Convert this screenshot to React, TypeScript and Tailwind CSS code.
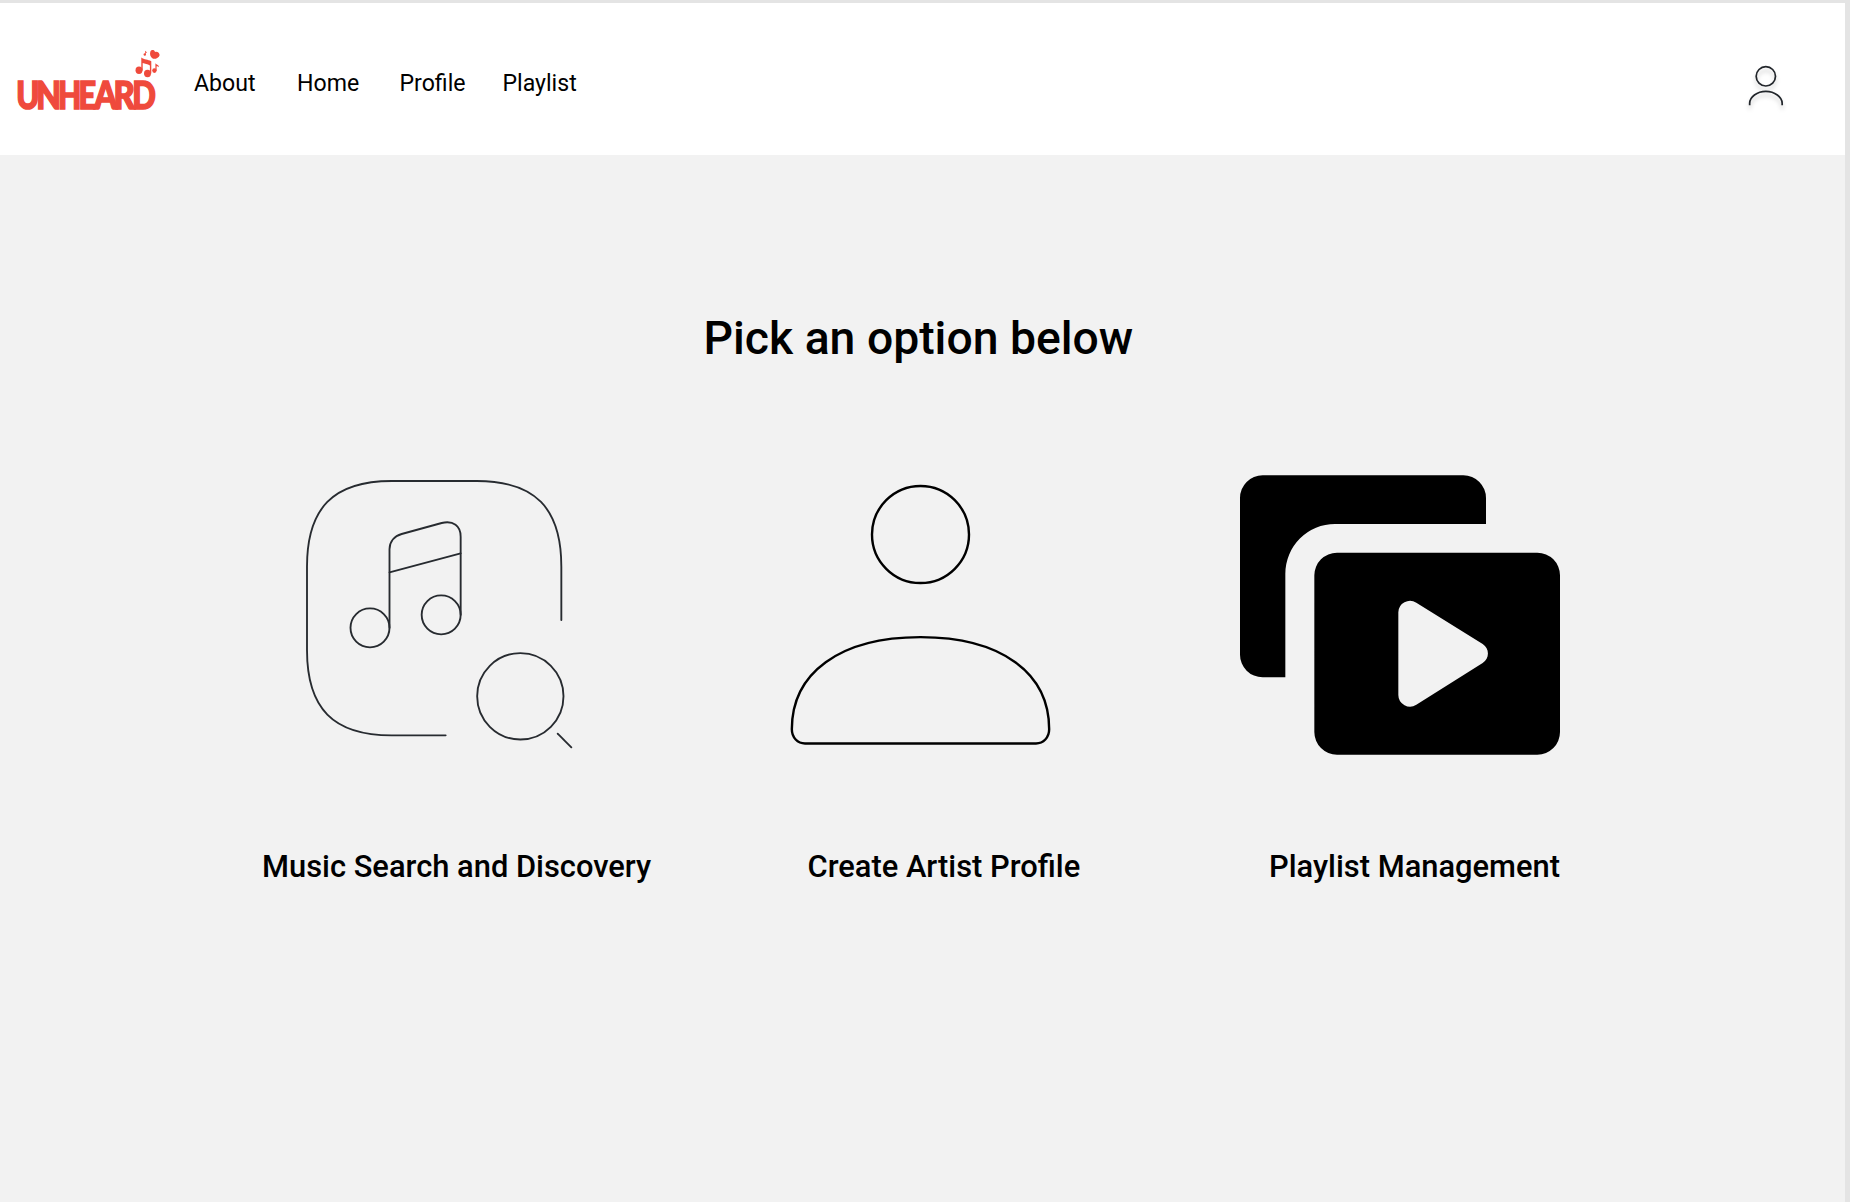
const letters = [
  { c: "U", x: 16.3, w: 23.2 },
  { c: "N", x: 36.3, w: 24.7 },
  { c: "H", x: 58, w: 23.3 },
  { c: "E", x: 78.6, w: 17.6 },
  { c: "A", x: 94.2, w: 23 },
  { c: "R", x: 113.6, w: 21.4 },
  { c: "D", x: 132.2, w: 23.6 },
];

function Logo() {
  return (
    <svg className="h-[80px] w-[170px] shrink-0" viewBox="0 40 170 80" fill="#ef4a3c" role="img" aria-label="Unheard">
      {letters.map((l) => (
        <text
          key={l.c}
          x={l.x}
          y="109"
          textLength={l.w}
          lengthAdjust="spacingAndGlyphs"
          fontFamily="Lato, sans-serif"
          fontWeight="900"
          fontSize="38.3"
          stroke="#ef4a3c"
          strokeWidth="1.6"
        >
          {l.c}
        </text>
      ))}
      <ellipse cx="139" cy="70.3" rx="3.5" ry="3.7" />
      <ellipse cx="147.5" cy="73.5" rx="3.5" ry="3.7" />
      <path d="M141.3 57.6C144 60 148 59.5 151.3 61.3V73.5H149.9V65.5C147.5 63.8 145 63.8 142.7 62.9V70.5H141.3Z" />
      <ellipse cx="154.4" cy="70.6" rx="2.2" ry="2.4" />
      <path d="M155.4 63.2C156.5 64.6 159 64.8 159 67.3C158.2 66.2 157.4 66 156.6 66.2V70.8H155.4Z" />
      <ellipse cx="144.8" cy="54.5" rx="1.2" ry="1.3" />
      <path d="M145.1 50.8C145.7 51.5 147 51.7 147.1 53L145.8 52.6V54.6H145.1Z" />
      <path d="M153 58.8C150.2 57.2 149.5 53.8 150.4 51.5C151.6 49.4 154.4 49.7 155 51.9C157.2 51 159.8 52.8 159.6 55.2C159 57.5 156.2 59.2 153 58.8Z" />
    </svg>
  );
}

function AccountIcon() {
  return (
    <svg
      className="h-[50px] w-[50px] drop-shadow-[0_4px_2px_rgba(0,0,0,0.2)]"
      viewBox="60 30 150 150"
      fill="none"
      stroke="#22262b"
      strokeWidth="5.2"
    >
      <circle cx="137.5" cy="79" r="29" />
      <path d="M89 166V160C89 141 111 124 137.5 124C164 124 186.5 141 186.5 160V166" />
    </svg>
  );
}

function MusicSearchIcon() {
  return (
    <svg className="h-[300px] w-[300px]" viewBox="0 0 900 900" fill="none" stroke="#272b30" strokeWidth="5.6" strokeLinecap="round">
      <path d="M814 480V320C814 145 736 63 560 63H305C129 63 51 145 51 320V570C51 745 129 826 305 826H467" />
      <circle cx="240" cy="503.5" r="58.5" />
      <circle cx="453.5" cy="464.5" r="58.5" />
      <path d="M298.5 503V268C298.5 245 313 228 335 222L455 189C490 181 512 197 512 230V464" />
      <path d="M298.5 337L512 280" />
      <circle cx="691" cy="709" r="129.5" />
      <path d="M803 821L844 862" />
    </svg>
  );
}

function ArtistIcon() {
  return (
    <svg className="h-[300px] w-[300px]" viewBox="0 0 900 900" fill="none" stroke="#000" strokeWidth="7.2">
      <circle cx="451.5" cy="223.5" r="145.5" />
      <path d="M105 850.5H798C820 850.5 837.5 833 837.5 808C837.5 640 695 531.5 451.5 531.5C208 531.5 65.5 640 65.5 808C65.5 833 83 850.5 105 850.5Z" />
    </svg>
  );
}

function PlaylistIcon() {
  return (
    <svg className="h-[300px] w-[350px]" viewBox="0 0 1050 900">
      <path d="M128 46H730A68 68 0 0 1 798 114V192H345A149 149 0 0 0 196 341V652H128A68 68 0 0 1 60 584V114A68 68 0 0 1 128 46Z" />
      <path
        fillRule="evenodd"
        d="M351 278H952A68 68 0 0 1 1020 346V816A68 68 0 0 1 952 884H351A68 68 0 0 1 283 816V346A68 68 0 0 1 351 278ZM535 457V705A35 35 0 0 0 589 734L788 609C809 595 809 566 788 552L589 428A35 35 0 0 0 535 457Z"
      />
    </svg>
  );
}

export default function App() {
  return (
    <div className="h-[1202px] w-[1850px] overflow-hidden border-t-[3px] border-r-[5px] border-[#e4e4e4] bg-[#f2f2f2] font-['Roboto',sans-serif] text-black">
      <header className="flex h-[152px] items-start bg-white">
        <div className="mt-[37px]">
          <Logo />
        </div>
        <nav className="mt-[67px] ml-[24px] flex text-[23.1px] leading-[28px]">
          <a className="w-[103px]">About</a>
          <a className="w-[102.5px]">Home</a>
          <a className="w-[103px]">Profile</a>
          <a>Playlist</a>
        </nav>
        <div className="mt-[57px] mr-[55px] ml-auto">
          <AccountIcon />
        </div>
      </header>
      <main>
        <h1 className="pt-[155px] pl-[703.5px] text-[46.3px] leading-[56px] font-medium whitespace-nowrap">
          Pick an option below
        </h1>
        <div className="mt-[94px] flex pl-[262px] text-[30.86px] leading-[36px] font-medium whitespace-nowrap">
          <section className="w-[508px]">
            <div className="pl-[28px]">
              <MusicSearchIcon />
            </div>
            <h2 className="mt-[89px]">Music Search and Discovery</h2>
          </section>
          <section className="w-[450px]">
            <ArtistIcon />
            <h2 className="mt-[89px] pl-[37.5px]">Create Artist Profile</h2>
          </section>
          <section className="w-[350px]">
            <PlaylistIcon />
            <h2 className="mt-[89px] pl-[49px]">Playlist Management</h2>
          </section>
        </div>
      </main>
    </div>
  );
}
